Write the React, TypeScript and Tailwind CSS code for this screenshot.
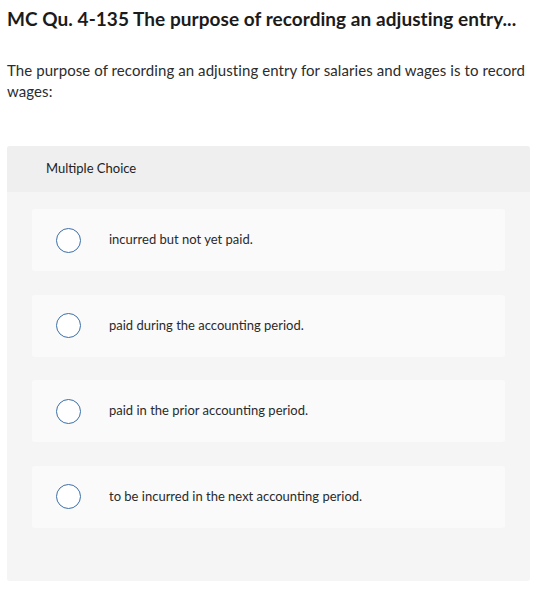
const options = [
  "incurred but not yet paid.",
  "paid during the accounting period.",
  "paid in the prior accounting period.",
  "to be incurred in the next accounting period.",
];

function Radio() {
  return <span className="block h-[25px] w-[25px] shrink-0 rounded-full border border-[#3b6fa8] bg-white" />;
}

export default function App() {
  return (
    <div className="min-h-[615px] bg-white px-[7px] pt-[7px] font-['Lato','Open_Sans',sans-serif] text-[#222]">
      <h1 className="text-[19px] font-bold leading-[24px] tracking-[0.05px] text-[#1b1b1b]">
        MC Qu. 4-135 The purpose of recording an adjusting entry...
      </h1>

      <p className="mt-[29px] w-[535px] text-[15px] leading-[21px] tracking-[0.08px] text-[#2c2c2c]">
        The purpose of recording an adjusting entry for salaries and wages is to record wages:
      </p>

      <div className="mt-[44px] w-[523px] overflow-hidden rounded-[3px] bg-[#f5f5f5]">
        <div className="flex h-[46px] items-center bg-[#efefef] px-[39px] text-[13px] text-[#222]">
          Multiple Choice
        </div>
        <div className="flex flex-col gap-[23.5px] px-[25px] pb-[53px] pt-[17px]">
          {options.map((o) => (
            <div key={o} className="flex h-[62px] items-center rounded-[3px] bg-[#fafafa] pl-[24px]">
              <Radio />
              <span className="ml-[28px] text-[13px] text-[#2a2a2a]">{o}</span>
            </div>
          ))}
        </div>
      </div>
    </div>
  );
}
